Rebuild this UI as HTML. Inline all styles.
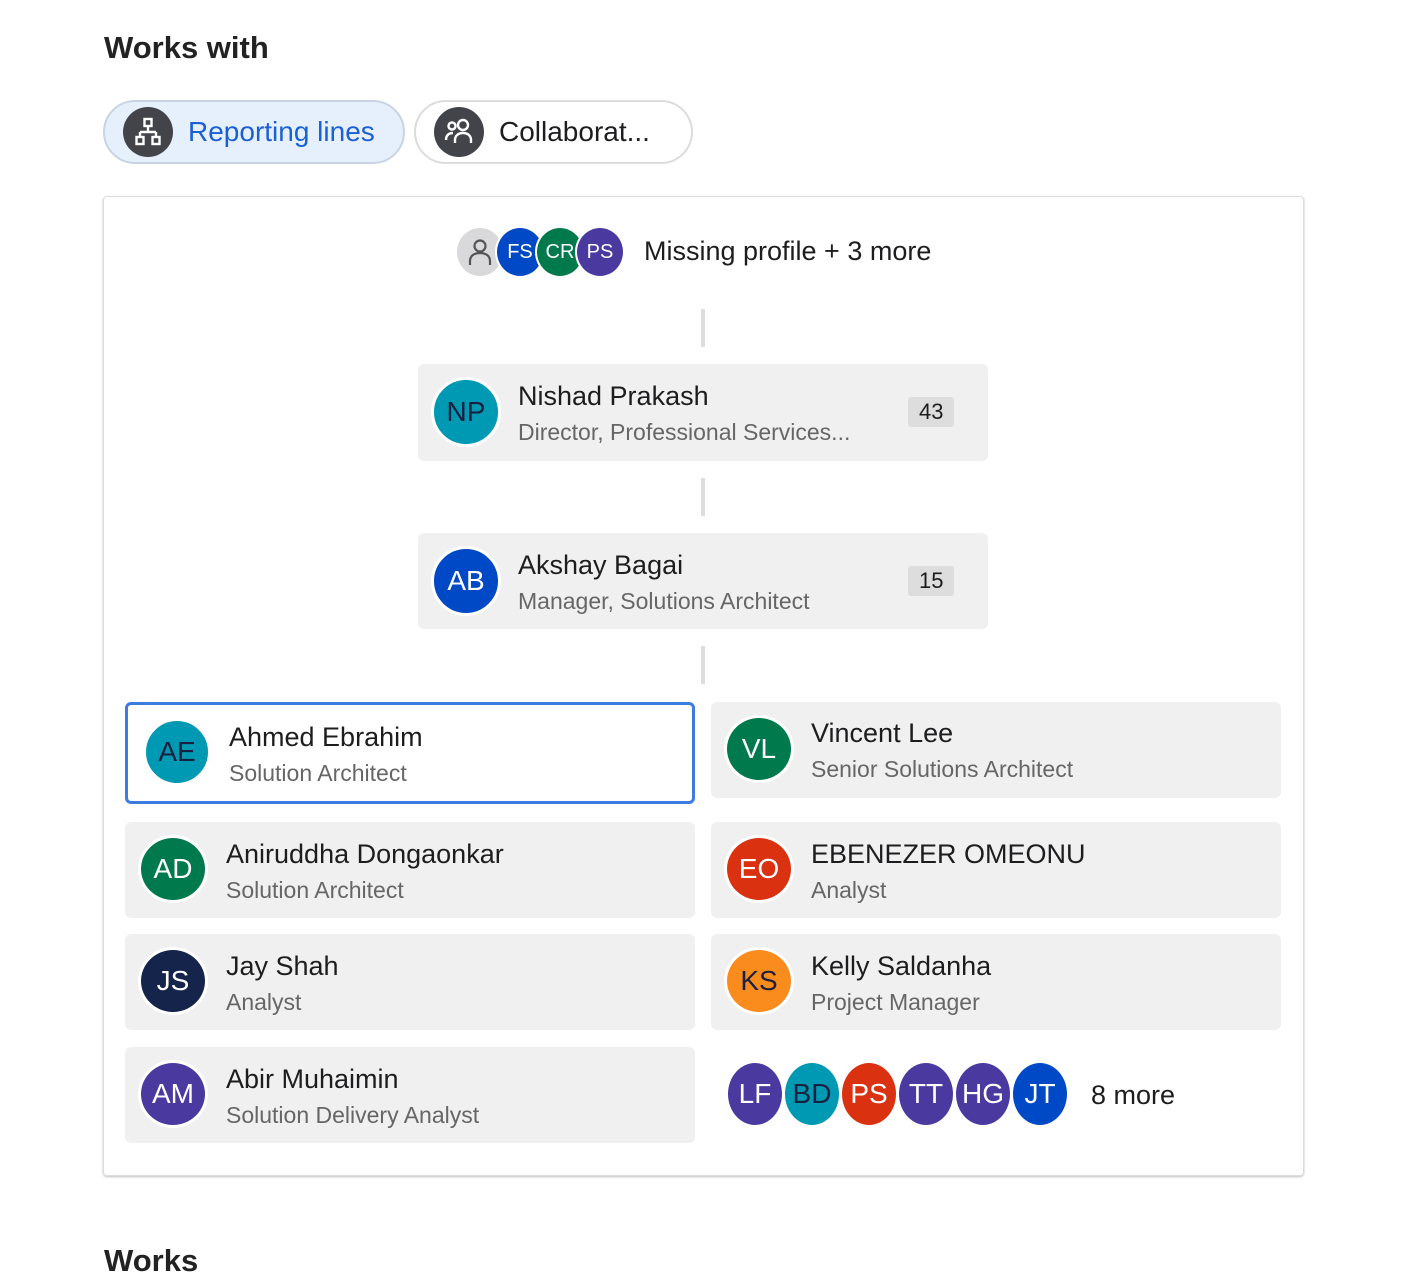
<!DOCTYPE html>
<html><head><meta charset="utf-8"><style>
*{box-sizing:border-box;margin:0;padding:0}
body{width:1402px;height:1250px;background:#fff;font-family:"Liberation Sans","DejaVu Sans",sans-serif;color:#1d1d1f;position:relative;overflow:hidden}
.abs{position:absolute}
h2{position:absolute;left:104px;top:30px;font-size:31px;font-weight:bold;color:#222}
.pill{position:absolute;top:100px;height:64px;border-radius:32px;border:2px solid #dcdcdc;display:flex;align-items:center;padding-left:18px;font-size:28px}
.pill .ic{width:50px;height:50px;border-radius:50%;background:#43444a;margin-right:15px;display:flex;align-items:center;justify-content:center}
.panel{position:absolute;left:103px;top:196px;width:1201px;height:980px;border:1px solid #ddd;border-radius:4px;box-shadow:0 1px 2px rgba(0,0,0,.25)}
.card{position:absolute;background:#f0f0f0;border-radius:6px}
.av{position:absolute;border-radius:50%;border:3px solid #fff;display:flex;align-items:center;justify-content:center;color:#fff;font-size:28px}
.nm{position:absolute;font-size:27px;color:#1d1d1f;white-space:nowrap}
.tt{position:absolute;font-size:23px;color:#666;white-space:nowrap}
.line{position:absolute;left:701px;width:4px;height:38px;background:#ddd}
.badge{position:absolute;background:#ddd;font-size:22px;padding:2px 11px;border-radius:3px}
.ov{position:absolute;width:60px;height:68px;border-radius:50%;border:3px solid #fff;display:flex;align-items:center;justify-content:center;color:#fff;font-size:28px;top:1060px}
.sm{position:absolute;top:226px;width:50px;height:52px;border-radius:50%;border:2px solid #fff;display:flex;align-items:center;justify-content:center;color:#fff;font-size:20px}
</style></head><body>
<h2>Works with</h2>
<div class="pill" style="left:103px;width:302px;background:#e6f0fd;border-color:#c9d4e3;color:#1a5fd3">
<div class="ic"><svg width="28" height="30" viewBox="0 0 28 30" fill="none" stroke="#fff" stroke-width="2.4"><rect x="10.5" y="2" width="7" height="7"/><path d="M14 9v6M6 15h16M6 15v5M22 15v5"/><rect x="2.5" y="20" width="7" height="7"/><rect x="18.5" y="20" width="7" height="7"/></svg></div>Reporting lines</div>
<div class="pill" style="left:414px;width:279px;color:#1d1d1f">
<div class="ic"><svg width="32" height="28" viewBox="0 0 32 28" fill="none" stroke="#fff" stroke-width="2.4"><circle cx="9" cy="8" r="3.5"/><circle cx="20" cy="7" r="5"/><path d="M3 22c0-5 3-7 7-7M12 25v-3c0-4 3-7 8-7s8 3 8 7v3"/></svg></div>Collaborat...</div>

<div class="panel"></div>
<div class="sm" style="left:455px;background:#d9d9dc"><svg width="26" height="30" viewBox="0 0 26 30" fill="none" stroke="#555" stroke-width="2.2"><circle cx="13" cy="9" r="5.5"/><path d="M3 28v-4c0-5 4-8 10-8s10 3 10 8v4"/></svg></div>
<div class="sm" style="left:495px;background:#0049c6">FS</div>
<div class="sm" style="left:535px;background:#007a4d">CR</div>
<div class="sm" style="left:575px;background:#4a3aa0">PS</div>
<div class="nm" style="left:644px;top:236px">Missing profile + 3 more</div>

<div class="line" style="top:309px"></div>
<div class="card" style="left:418px;top:364px;width:570px;height:97px"></div>
<div class="av" style="left:431px;top:377px;width:70px;height:70px;background:#0099b3;color:#1a2040">NP</div>
<div class="nm" style="left:518px;top:381px">Nishad Prakash</div>
<div class="tt" style="left:518px;top:419px">Director, Professional Services...</div>
<div class="badge" style="left:908px;top:397px">43</div>

<div class="line" style="top:478px"></div>
<div class="card" style="left:418px;top:533px;width:570px;height:96px"></div>
<div class="av" style="left:431px;top:546px;width:70px;height:70px;background:#0049c6">AB</div>
<div class="nm" style="left:518px;top:550px">Akshay Bagai</div>
<div class="tt" style="left:518px;top:588px">Manager, Solutions Architect</div>
<div class="badge" style="left:908px;top:566px">15</div>

<div class="line" style="top:646px"></div>

<div class="card" style="left:125px;top:702px;width:570px;height:102px;background:#fff;border:3px solid #3c7be0"></div>
<div class="av" style="left:143px;top:718px;width:68px;height:68px;background:#0099b3;color:#1a2040">AE</div>
<div class="nm" style="left:229px;top:722px">Ahmed Ebrahim</div>
<div class="tt" style="left:229px;top:760px">Solution Architect</div>

<div class="card" style="left:711px;top:702px;width:570px;height:96px"></div>
<div class="av" style="left:724px;top:715px;width:70px;height:68px;background:#007a4d">VL</div>
<div class="nm" style="left:811px;top:718px">Vincent Lee</div>
<div class="tt" style="left:811px;top:756px">Senior Solutions Architect</div>

<div class="card" style="left:125px;top:822px;width:570px;height:96px"></div>
<div class="av" style="left:138px;top:835px;width:70px;height:68px;background:#007a4d">AD</div>
<div class="nm" style="left:226px;top:839px">Aniruddha Dongaonkar</div>
<div class="tt" style="left:226px;top:877px">Solution Architect</div>

<div class="card" style="left:711px;top:822px;width:570px;height:96px"></div>
<div class="av" style="left:724px;top:835px;width:70px;height:68px;background:#da3210">EO</div>
<div class="nm" style="left:811px;top:839px">EBENEZER OMEONU</div>
<div class="tt" style="left:811px;top:877px">Analyst</div>

<div class="card" style="left:125px;top:934px;width:570px;height:96px"></div>
<div class="av" style="left:138px;top:947px;width:70px;height:68px;background:#15244a">JS</div>
<div class="nm" style="left:226px;top:951px">Jay Shah</div>
<div class="tt" style="left:226px;top:989px">Analyst</div>

<div class="card" style="left:711px;top:934px;width:570px;height:96px"></div>
<div class="av" style="left:724px;top:947px;width:70px;height:68px;background:#fa8c1e;color:#1a2040">KS</div>
<div class="nm" style="left:811px;top:951px">Kelly Saldanha</div>
<div class="tt" style="left:811px;top:989px">Project Manager</div>

<div class="card" style="left:125px;top:1047px;width:570px;height:96px"></div>
<div class="av" style="left:138px;top:1060px;width:70px;height:68px;background:#4a3aa0">AM</div>
<div class="nm" style="left:226px;top:1064px">Abir Muhaimin</div>
<div class="tt" style="left:226px;top:1102px">Solution Delivery Analyst</div>

<div class="ov" style="left:725px;background:#4a3aa0">LF</div>
<div class="ov" style="left:782px;background:#0099b3;color:#1a2040">BD</div>
<div class="ov" style="left:839px;background:#da3210">PS</div>
<div class="ov" style="left:896px;background:#4a3aa0">TT</div>
<div class="ov" style="left:953px;background:#4a3aa0">HG</div>
<div class="ov" style="left:1010px;background:#0049c6">JT</div>
<div class="nm" style="left:1091px;top:1080px">8 more</div>

<div class="abs" style="left:104px;top:1243px;font-size:31px;font-weight:bold;color:#222">Works</div>
</body></html>
